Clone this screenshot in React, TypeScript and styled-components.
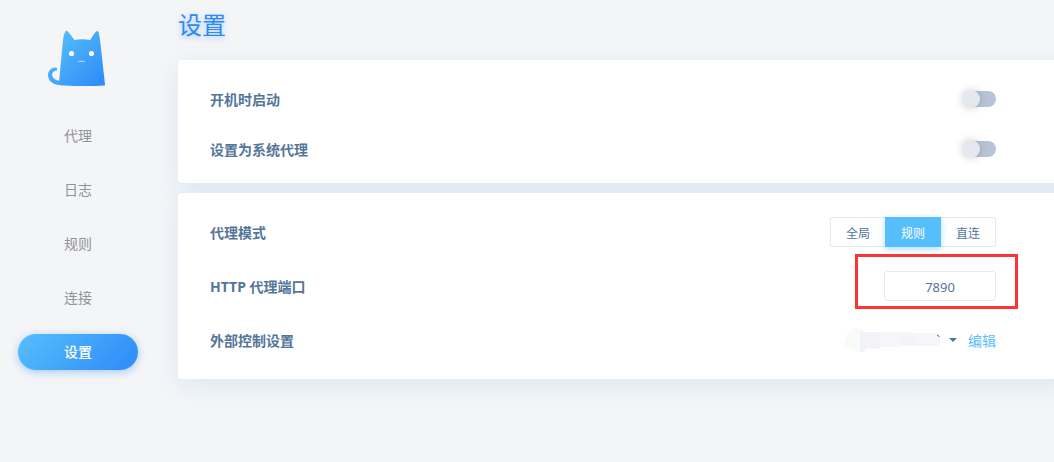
import React, { useState } from "react";
import styled, { createGlobalStyle } from "styled-components";

const GlobalStyle = createGlobalStyle`
  *, *::before, *::after { box-sizing: border-box; }
  body {
    margin: 0;
    background: #f4f5f7;
    font-family: "Noto Sans", "Noto Sans CJK SC", sans-serif;
    font-size: 14px;
    color: #54759a;
  }
  button, input, select { font: inherit; color: inherit; }
`;

const Page = styled.div`
  display: grid;
  grid-template-columns: 178px 1fr;
  min-height: 100vh;
  overflow: hidden;
`;

const Sidebar = styled.aside`
  display: flex;
  flex-direction: column;
  align-items: center;
  padding: 30px 22px 0 0;
`;

const Logo = styled.svg`
  display: block;
  width: 60px;
  height: 58px;
  margin-bottom: 30px;
`;

const Menu = styled.nav`
  display: flex;
  flex-direction: column;
  gap: 18px;
`;

const MenuLink = styled.a<{ $active?: boolean }>`
  width: 120px;
  height: 36px;
  line-height: 36px;
  border-radius: 18px;
  text-align: center;
  text-decoration: none;
  color: ${(p) => (p.$active ? "#fff" : "#909399")};
  font-weight: ${(p) => (p.$active ? 500 : 400)};
  background: ${(p) => (p.$active ? "linear-gradient(135deg, #57befc, #2c8af8)" : "none")};
  box-shadow: ${(p) => (p.$active ? "0 2px 8px rgba(44, 138, 248, 0.4)" : "none")};
`;

const Content = styled.main`
  display: flex;
  flex-direction: column;
  gap: 10px;
  margin-right: -26px;
`;

const Title = styled.h1`
  margin: 0;
  height: 50px;
  line-height: 50px;
  font-size: 24px;
  font-weight: 400;
  color: #2c8af8;
  text-shadow: 0 2px 6px rgba(44, 138, 248, 0.4);
`;

const Card = styled.section<{ $compact?: boolean }>`
  display: flex;
  flex-direction: column;
  gap: ${(p) => (p.$compact ? 20 : 24)}px;
  padding: 24px 84px ${(p) => (p.$compact ? 19 : 24)}px 32px;
  background: #fff;
  border-radius: 4px;
  box-shadow: 0 6px 24px rgba(44, 138, 226, 0.12);
`;

const Row = styled.div`
  display: flex;
  align-items: center;
  justify-content: space-between;
  height: 30px;
`;

const Label = styled.label`
  padding-top: 2px;
  line-height: 20px;
  font-weight: 700;
`;

const Switch = styled.input`
  appearance: none;
  position: relative;
  width: 32px;
  height: 16px;
  margin: 0;
  border-radius: 8px;
  background: #b7c4d7;
  cursor: pointer;
  &::before {
    content: "";
    position: absolute;
    top: -1px;
    left: -2px;
    width: 18px;
    height: 18px;
    border-radius: 50%;
    background: #e4e9f0;
    box-shadow: 0 0 8px rgba(0, 0, 0, 0.2);
  }
  &:checked { background: #57befc; }
  &:checked::before { left: 16px; }
`;

const Segments = styled.div`
  display: flex;
  width: 166px;
  height: 30px;
`;

const Segment = styled.button<{ $active: boolean }>`
  flex: 1;
  padding: 2px 0 0;
  border: 1px solid ${(p) => (p.$active ? "#57befc" : "#e4eaf1")};
  background: ${(p) => (p.$active ? "#57befc" : "#fff")};
  color: ${(p) => (p.$active ? "#fff" : "#54759a")};
  box-shadow: ${(p) => (p.$active ? "0 2px 6px rgba(87, 190, 252, 0.5)" : "none")};
  font-size: 12px;
  z-index: ${(p) => (p.$active ? 1 : 0)};
  &:first-child { border-right: 0; border-radius: 3px 0 0 3px; }
  &:last-child { border-left: 0; border-radius: 0 3px 3px 0; }
`;

const PortField = styled.div`
  position: relative;
  width: 112px;
  height: 30px;
`;

const PortInput = styled.input`
  display: block;
  width: 100%;
  height: 100%;
  padding: 2px 0 0;
  border: 1px solid #e4eaf1;
  border-radius: 3px;
  background: #fff;
  text-align: center;
  font-size: 13px;
`;

const Highlight = styled.div`
  position: absolute;
  inset: -17px -22px -8px -29px;
  border: 3px solid #fb3535;
  pointer-events: none;
`;

const Controls = styled.div`
  display: flex;
  align-items: center;
`;

const Smudge = styled.svg`
  display: block;
  width: 98px;
  height: 26px;
`;

const Caret = styled.svg`
  display: block;
  width: 8px;
  height: 4px;
  margin: 0 11px 0 7px;
`;

const EditLink = styled.a`
  padding-top: 2px;
  color: #57befc;
  line-height: 20px;
  text-decoration: none;
`;

const MENU = ["代理", "日志", "规则", "连接", "设置"];
const MODES = ["全局", "规则", "直连"];

export default function App() {
  const [mode, setMode] = useState("规则");
  const [port, setPort] = useState("7890");

  return (
    <>
      <GlobalStyle />
      <Page>
        <Sidebar>
          <Logo viewBox="0 0 60 58" aria-hidden="true">
            <defs>
              <linearGradient id="cat" x1="8" y1="4" x2="58" y2="54" gradientUnits="userSpaceOnUse">
                <stop offset="0" stopColor="#57befc" />
                <stop offset="1" stopColor="#2c8af8" />
              </linearGradient>
            </defs>
            <path
              fill="url(#cat)"
              d="M17.2 1.8Q18.3-.1 19.8 1.6Q23.3 5.5 26.4 10Q34 8.5 42.2 10Q45 5 48.1 1.6Q49.6.1 50.4 1.9C51.5 5 52 10 52.5 14L57 54.6Q57.1 55.4 56.2 55.5C46 56.2 28 56.2 17 55.5C11 55.2 6 54.8 2.6 51.5C-1.4 47.1-.6 41.2 3.6 38.6Q6.4 37.2 8.3 37.8Q9.5 38.6 9 39.8Q8.7 40.7 7.4 40.8C3.9 41.5 3.2 45.5 5.5 48.1C7 49.9 9 50.6 11.3 50.8C12.3 40 14.5 14 15.2 9C15.6 6 16.2 3.8 17.2 1.8Z"
            />
            <circle cx="23.5" cy="23.5" r="2.6" fill="#fff" />
            <circle cx="43.5" cy="23.5" r="2.6" fill="#fff" />
            <path d="M30 31.5H37M33.5 30.2V31.5" fill="none" stroke="#fff" strokeOpacity="0.65" strokeWidth="0.8" />
          </Logo>
          <Menu>
            {MENU.map((name) => (
              <MenuLink key={name} href="#" $active={name === "设置"}>
                {name}
              </MenuLink>
            ))}
          </Menu>
        </Sidebar>
        <Content>
          <Title>设置</Title>
          <Card $compact>
            <Row>
              <Label htmlFor="startup">开机时启动</Label>
              <Switch type="checkbox" id="startup" />
            </Row>
            <Row>
              <Label htmlFor="system">设置为系统代理</Label>
              <Switch type="checkbox" id="system" />
            </Row>
          </Card>
          <Card>
            <Row>
              <Label as="span" id="mode">代理模式</Label>
              <Segments role="group" aria-labelledby="mode">
                {MODES.map((name) => (
                  <Segment key={name} type="button" $active={name === mode} onClick={() => setMode(name)}>
                    {name}
                  </Segment>
                ))}
              </Segments>
            </Row>
            <Row>
              <Label htmlFor="port">HTTP 代理端口</Label>
              <PortField>
                <PortInput id="port" value={port} onChange={(e) => setPort(e.target.value)} />
                <Highlight />
              </PortField>
            </Row>
            <Row>
              <Label as="span">外部控制设置</Label>
              <Controls>
                <Smudge viewBox="0 0 98 26" aria-hidden="true">
                  <path d="M4 4L8 1L14 1L18 4V25L14 25L8 22L1 20L0 13L3 10Z" fill="#f9fbfa" />
                  <path d="M16 3L20 5H36V21L32 22L22 21L20 25H16Z" fill="#f1f3f8" />
                  <path d="M36 5H66L68 6H91L94 9L96 12V18L90 19H56V20H36Z" fill="#f4f6f9" />
                  <path d="M56 10H70V19H56Z" fill="#f2f4f8" />
                  <path d="M93 8L95 9L95 10" fill="none" stroke="#54759a" />
                </Smudge>
                <Caret viewBox="0 0 8 4" aria-hidden="true">
                  <path d="M0 0H8L4 4Z" fill="#54759a" />
                </Caret>
                <EditLink href="#">编辑</EditLink>
              </Controls>
            </Row>
          </Card>
        </Content>
      </Page>
    </>
  );
}
